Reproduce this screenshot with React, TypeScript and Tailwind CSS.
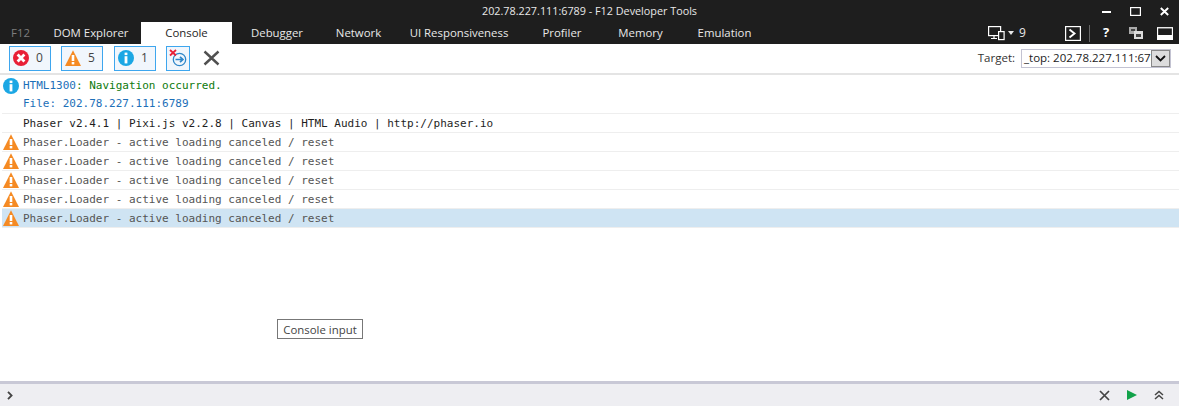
import React from "react";

const ui = "font-['Open_Sans','Noto_Sans',sans-serif]";

function ErrorIcon() {
  return (
    <svg width="16" height="16" viewBox="0 0 16 16">
      <circle cx="8" cy="8" r="8" fill="#e81f36" />
      <path d="M4.6 4.6l6.8 6.8M11.4 4.6l-6.8 6.8" stroke="#fff" strokeWidth="2.8" />
    </svg>
  );
}
function WarnIcon({ size = 16 }: { size?: number }) {
  return (
    <svg width={size} height={size} viewBox="0 0 16 16">
      <path d="M8 .3 16 16H0Z" fill="#f58a23" />
      <path d="M8 5v6" stroke="#fff" strokeWidth="2.6" />
      <rect x="6.7" y="12" width="2.6" height="2.4" fill="#fff" />
    </svg>
  );
}
function InfoIcon() {
  return (
    <svg width="16" height="16" viewBox="0 0 16 16">
      <circle cx="8" cy="8" r="8" fill="#1ba7e4" />
      <rect x="6.6" y="2.6" width="2.8" height="2.5" fill="#fff" />
      <rect x="6.6" y="6.2" width="2.8" height="7.2" fill="#fff" />
    </svg>
  );
}

function Badge({ icon, n, w }: { icon: React.ReactNode; n: number; w: string }) {
  return (
    <div className={`flex h-[25px] items-center border border-[#3ea6ee] bg-[#f1f6fc] pl-[3px] ${w}`}>
      {icon}
      <span className="ml-[7px] text-[12px] leading-none text-[#444]">{n}</span>
    </div>
  );
}

const tabs = [
  ["F12", "w-[41px] text-[#7d7d7d]"],
  ["DOM Explorer", "w-[100px] text-[#e8e8e8]"],
  ["Console", "w-[91px] bg-white text-[#1e1e1e]"],
  ["Debugger", "w-[90px] text-[#e8e8e8]"],
  ["Network", "w-[73px] text-[#e8e8e8]"],
  ["UI Responsiveness", "w-[128px] text-[#e8e8e8]"],
  ["Profiler", "w-[78px] text-[#e8e8e8]"],
  ["Memory", "w-[79px] text-[#e8e8e8]"],
  ["Emulation", "w-[89px] text-[#e8e8e8]"],
];

const warnRow = "Phaser.Loader - active loading canceled / reset";

function Row({ selected }: { selected?: boolean }) {
  return (
    <div className={`ml-[2px] flex h-[19px] items-center border-b border-[#eeeeee] ${selected ? "bg-[#cfe4f3]" : ""}`}>
      <span className="ml-[1px] flex w-[20px] shrink-0"><WarnIcon /></span>
      <span className="text-[#555]">{warnRow}</span>
    </div>
  );
}

export default function App() {
  return (
    <div className={`flex h-[406px] w-[1179px] flex-col overflow-hidden bg-white ${ui}`}>
      <header className="bg-[#1e1e1e]">
        <div className="relative flex h-[22px] items-center justify-center text-[10.8px] text-[#e8e8e8]">
          202.78.227.111:6789 - F12 Developer Tools
          <div className="absolute right-[10px] top-[6px] flex items-start gap-[19px] text-white">
            <svg width="9" height="10" viewBox="0 0 9 10"><rect x="0" y="5" width="9" height="2" fill="#fff" /></svg>
            <svg width="11" height="10" viewBox="0 0 11 10"><rect x="0.6" y="1.6" width="9.8" height="7.8" fill="none" stroke="#fff" strokeWidth="1.2" /></svg>
            <svg width="9" height="10" viewBox="0 0 9 10"><path d="M.8 2l7.4 7M8.2 2 .8 9" stroke="#fff" strokeWidth="1.9" /></svg>
          </div>
        </div>
        <div className="flex h-[22px] items-center">
          {tabs.map(([t, c]) => (
            <div key={t} className={`flex h-full items-center justify-center text-[11.4px] ${c}`}>{t}</div>
          ))}
          <div className="ml-auto flex h-full items-center pr-[6px] text-[#e8e8e8]">
            <svg width="17" height="16" viewBox="0 0 17 16" fill="none" stroke="#fff" strokeWidth="1.2">
              <rect x="0.6" y="1.6" width="12" height="9" />
              <path d="M3 13.5h6M6 11v2.5" />
              <rect x="10.6" y="6.6" width="5.5" height="8" fill="#1e1e1e" />
            </svg>
            <svg className="ml-[3px]" width="6" height="4" viewBox="0 0 6 4"><path d="M0 0h6L3 4Z" fill="#e8e8e8" /></svg>
            <span className="ml-[5px] w-[30px] text-[12px]">9</span>
            <svg className="ml-[16px]" width="16" height="15" viewBox="0 0 16 15" fill="none" stroke="#fff">
              <rect x="0.6" y="0.6" width="14.8" height="13.8" strokeWidth="1.2" />
              <path d="M4.5 3.5 9.5 7.5 4.5 11.5" strokeWidth="1.9" />
            </svg>
            <div className="ml-[8px] mr-[9px] h-[17px] w-px bg-[#666]" />
            <span className="w-[14px] text-center text-[13px] font-bold text-white">?</span>
            <svg className="ml-[16px]" width="14" height="12" viewBox="0 0 14 12">
              <rect x="0" y="0" width="8" height="7" fill="#aaa" />
              <rect x="2" y="2" width="4" height="2" fill="#444" />
              <rect x="5" y="4" width="9" height="8" fill="#ddd" />
              <rect x="7" y="7" width="5" height="3" fill="#444" />
            </svg>
            <svg className="ml-[14px]" width="16" height="13" viewBox="0 0 16 13">
              <rect x="0.5" y="0.75" width="15" height="11.75" fill="none" stroke="#fff" strokeWidth="1.3" />
              <rect x="1" y="8" width="14" height="4" fill="#fff" />
            </svg>
          </div>
        </div>
      </header>

      <div className="flex h-[31px] shrink-0 items-center border-b-2 border-[#e4e4e4] pl-[9px] pb-[1px]">
        <Badge w="w-[42px] mr-[10px]" n={0} icon={<ErrorIcon />} />
        <Badge w="w-[42px] mr-[11px]" n={5} icon={<WarnIcon />} />
        <Badge w="w-[42px] mr-[10px]" n={1} icon={<InfoIcon />} />
        <div className="flex h-[25px] w-[24px] items-center justify-center border border-[#3ea6ee] bg-[#f1f6fc]">
          <svg width="18" height="18" viewBox="0 0 18 18" fill="none">
            <circle cx="10.5" cy="10.5" r="6.2" stroke="#2e86c9" strokeWidth="1.3" />
            <path d="M6.5 10.5h7M11 7.8l2.9 2.7-2.9 2.7" stroke="#2e86c9" strokeWidth="1.7" />
            <path d="M1 1l6 5.5M7 1 1 6.5" stroke="#e81f36" strokeWidth="1.8" />
          </svg>
        </div>
        <svg className="ml-[13px]" width="17" height="16" viewBox="0 0 17 16"><path d="M1.5 1.5l14 13M15.5 1.5l-14 13" stroke="#505050" strokeWidth="2.4" /></svg>
        <div className="ml-auto mr-[8px] flex items-center text-[11.5px] text-[#333]">
          <span className="mr-[6px]">Target:</span>
          <div className="flex h-[19px] w-[150px] items-center border border-[#c3c3d2]">
            <span className="w-[129px] overflow-hidden whitespace-nowrap pl-[2px] text-[#222]">_top: 202.78.227.111:6789</span>
            <span className="flex h-full flex-1 items-center justify-center border border-[#888] bg-[#ddd]">
              <svg width="11" height="7" viewBox="0 0 11 7"><path d="M1 1l4.5 4.5L10 1" fill="none" stroke="#111" strokeWidth="1.8" /></svg>
            </span>
          </div>
        </div>
      </div>

      <main className="min-h-0 flex-1 font-['DejaVu_Sans_Mono',monospace] text-[11px] leading-[19px]">
        <div className="ml-[2px] mt-[1px] flex border-b border-[#eeeeee]">
          <span className="ml-[1px] mt-[2px] flex w-[20px] shrink-0 items-start"><InfoIcon /></span>
          <div>
            <div><span className="text-[#1c6fb8]">HTML1300</span><span className="text-[#0d7a0d]">: Navigation occurred.</span></div>
            <div className="leading-[18px] text-[#1c6fb8]">File: 202.78.227.111:6789</div>
          </div>
        </div>
        <div className="ml-[2px] flex h-[19px] items-center border-b border-[#eeeeee] pl-[21px] text-[#1e1e1e]">
          Phaser v2.4.1 | Pixi.js v2.2.8 | Canvas | HTML Audio | http://phaser.io
        </div>
        <Row />
        <Row />
        <Row />
        <Row />
        <Row selected />
        <div className={`relative ${ui}`}>
          <div className="absolute left-[277px] top-[91px] flex h-[20px] w-[86px] items-center justify-center border border-[#777] bg-white text-[11.4px] text-[#444]">
            Console input
          </div>
        </div>
      </main>

      <footer className="flex h-[25px] shrink-0 items-center border-t-[3px] border-[#c8c8d6] bg-[#eeeef2] pl-[7px] pr-[15px]">
        <svg width="6" height="9" viewBox="0 0 6 9"><path d="M1 .8 4.6 4.5 1 8.2" fill="none" stroke="#444" strokeWidth="1.8" /></svg>
        <svg className="ml-auto" width="11" height="11" viewBox="0 0 11 11"><path d="M1 1l9 9M10 1l-9 9" stroke="#444" strokeWidth="1.7" /></svg>
        <svg className="ml-[17px]" width="10" height="10" viewBox="0 0 10 10"><path d="M0 0l10 5-10 5Z" fill="#12a24a" /></svg>
        <svg className="ml-[17px]" width="10" height="10" viewBox="0 0 10 10"><path d="M1 5l4-3.5L9 5M1 9l4-3.5L9 9" fill="none" stroke="#444" strokeWidth="1.5" /></svg>
      </footer>
    </div>
  );
}
